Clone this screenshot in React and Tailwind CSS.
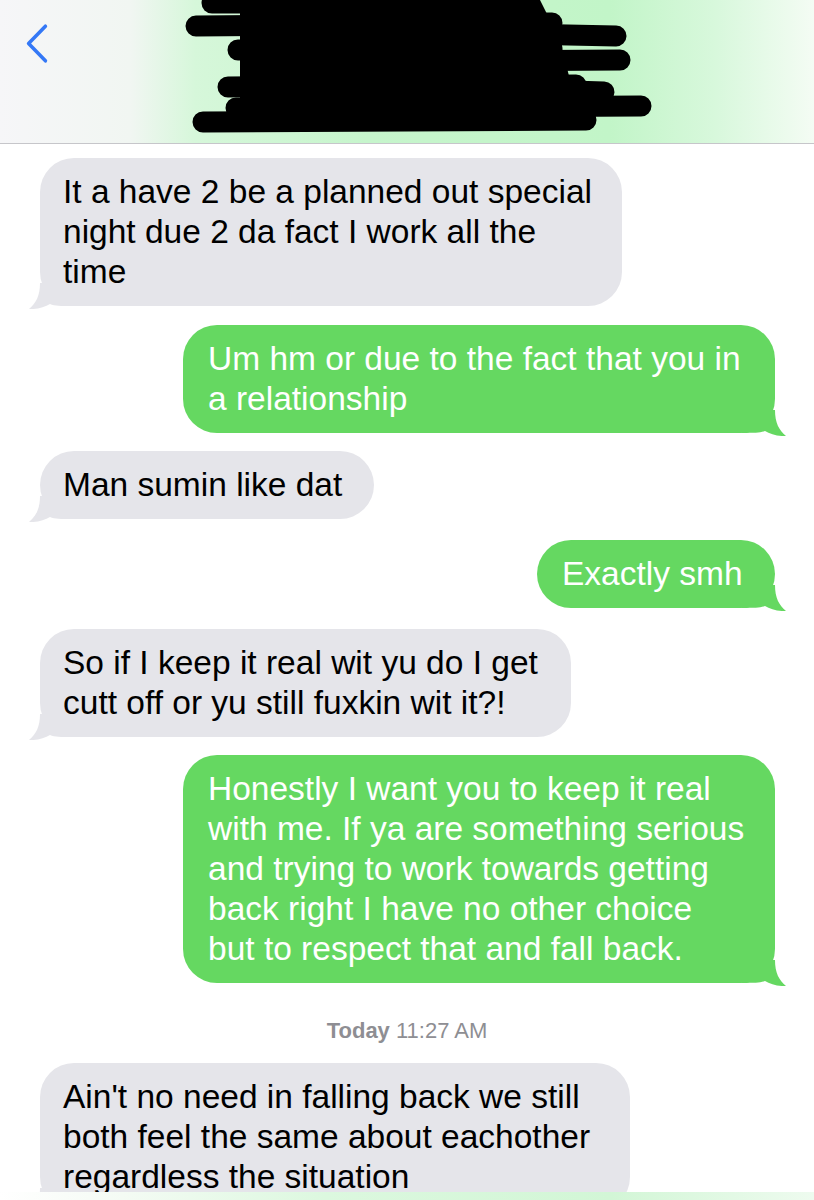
import React from 'react';

const messages = [
    {
        from: 'them',
        width: 'w-[582px]',
        gap: 'mt-[14px]',
        lines: ['It a have 2 be a planned out special', 'night due 2 da fact I work all the', 'time'],
    },
    {
        from: 'me',
        width: 'w-[592px]',
        gap: 'mt-[19px]',
        lines: ['Um hm or due to the fact that you in', 'a relationship'],
    },
    {
        from: 'them',
        width: 'w-[334px]',
        gap: 'mt-[18px]',
        lines: ['Man sumin like dat'],
    },
    {
        from: 'me',
        width: 'w-[238px]',
        gap: 'mt-[21px]',
        lines: ['Exactly smh'],
    },
    {
        from: 'them',
        width: 'w-[531px]',
        gap: 'mt-[21px]',
        lines: ['So if I keep it real wit yu do I get', 'cutt off or yu still fuxkin wit it?!'],
    },
    {
        from: 'me',
        width: 'w-[592px]',
        gap: 'mt-[18px]',
        lines: [
            'Honestly I want you to keep it real',
            'with me. If ya are something serious',
            'and trying to work towards getting',
            'back right I have no other choice',
            'but to respect that and fall back.',
        ],
    },
];

const lastMessage = {
    from: 'them',
    width: 'w-[590px]',
    gap: 'mt-[20px]',
    lines: ['Ain\'t no need in falling back we still', 'both feel the same about eachother', 'regardless the situation'],
};

const Tail = ({ mine }) => (
    <svg
        viewBox="0 0 44 26"
        className={
            mine
                ? 'absolute -right-[11px] -bottom-[3px] w-[44px] h-[26px] -scale-x-100 fill-[#65d861]'
                : 'absolute -left-[11px] -bottom-[3px] w-[44px] h-[26px] fill-[#e5e5ea]'
        }
    >
        <path d="M11 0 C11 13 7 20 0 26 C8 26.5 16 24 21 21 C26 23 31 23 44 23 L44 0 Z" />
    </svg>
);

const Bubble = ({ msg }) => {
    const mine = msg.from === 'me';
    return (
        <div className={`flex ${mine ? 'justify-end pr-[39px]' : 'justify-start pl-[40px]'} ${msg.gap}`}>
            <div
                className={`relative ${msg.width} rounded-[34px] py-[14px] text-[33.5px] leading-[40px] whitespace-nowrap ${
                    mine ? 'bg-[#65d861] text-white pl-[25px]' : 'bg-[#e5e5ea] text-black pl-[23px]'
                }`}
            >
                <Tail mine={mine} />
                <div className="relative">
                    {msg.lines.map((line, i) => (
                        <div key={i}>{line}</div>
                    ))}
                </div>
            </div>
        </div>
    );
};

const Scribble = () => (
    <svg viewBox="0 0 814 143" className="absolute inset-0 w-full h-full">
        <g stroke="#000" strokeWidth="21" strokeLinecap="round" fill="none">
            <line x1="212" y1="3" x2="505" y2="3" />
            <line x1="196" y1="26" x2="552" y2="23" />
            <line x1="470" y1="33" x2="616" y2="36" />
            <line x1="238" y1="50" x2="552" y2="48" />
            <line x1="262" y1="62" x2="620" y2="60" />
            <line x1="228" y1="87" x2="576" y2="85" />
            <line x1="540" y1="90" x2="604" y2="92" />
            <line x1="236" y1="108" x2="641" y2="106" />
            <line x1="203" y1="122" x2="586" y2="120" />
        </g>
        <path d="M240 0 L540 0 L560 40 L575 100 L560 118 L240 118 Z" fill="#000" />
    </svg>
);

const App = () => {
    return (
        <div className="w-[814px] h-[1200px] overflow-hidden bg-white flex flex-col font-['Liberation_Sans',Arial,sans-serif]">
            {/* Header */}
            <header className="relative shrink-0 h-[144px] border-b border-[#c6c6ca] bg-[linear-gradient(90deg,#f6f6f8_0%,#f1f6f2_16%,#d6f7da_24%,#c6f5cc_45%,#c2f5c8_75%,#d8f8dc_88%,#f4fcf4_100%)]">
                <svg viewBox="0 0 24 40" className="absolute left-[24px] top-[22px] w-[26px] h-[42px]">
                    <polyline
                        points="20,4 4,20.5 20,37"
                        fill="none"
                        stroke="#3478f6"
                        strokeWidth="3.4"
                        strokeLinecap="round"
                        strokeLinejoin="round"
                    />
                </svg>
                <Scribble />
            </header>

            {/* Messages */}
            <main className="flex-1 overflow-hidden flex flex-col">
                {messages.map((m, i) => (
                    <Bubble key={i} msg={m} />
                ))}

                <div className="mt-[36px] h-[24px] text-center text-[22px] leading-[24px] text-[#8e8e93]">
                    <span className="font-bold">Today</span> 11:27 AM
                </div>

                <Bubble msg={lastMessage} />
            </main>

            {/* Bottom bar */}
            <div className="shrink-0 h-[8px] bg-[linear-gradient(90deg,#ffffff_0%,#f4fbf4_15%,#dcf8df_40%,#d2f6d6_75%,#eefbef_100%)]" />
        </div>
    );
};

export default App;
